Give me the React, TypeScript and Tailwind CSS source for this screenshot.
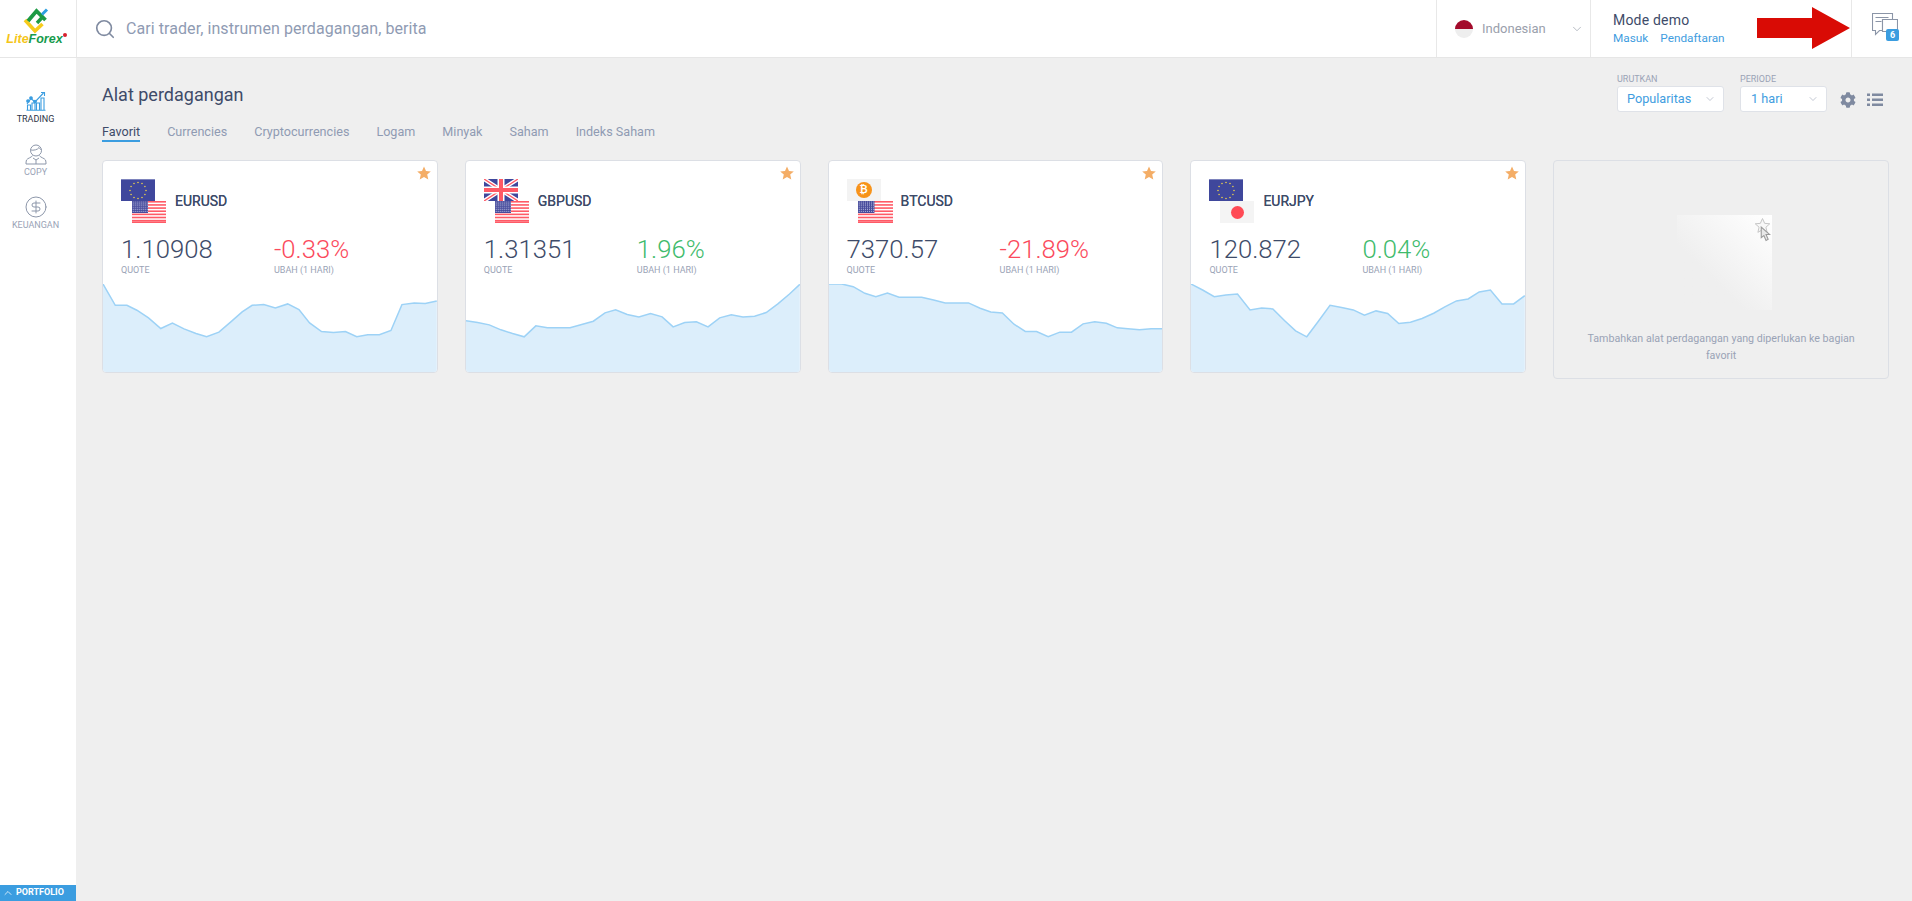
import React from "react";
import { Search, ChevronDown, ChevronUp, CircleDollarSign } from "lucide-react";
import { FaCog } from "react-icons/fa";

function UsFlag({ w = 34 }: { w?: number }) {
  const stripes = [0, 1, 2, 3, 4, 5, 6];
  const dots: React.ReactElement[] = [];
  for (let r = 0; r < 6; r++) for (let c = 0; c < 8; c++) dots.push(<circle key={r + "-" + c} cx={1.2 + c * 2} cy={1 + r * 1.9} r={0.55} fill="#b9bde0" />);
  return (
    <svg width={w} height={22} viewBox="0 0 34 22" preserveAspectRatio="none" className="block shrink-0">
      <rect width="34" height="22" fill="#fff" />
      {stripes.map((i) => <rect key={i} y={i * 3.14} width="34" height="1.6" fill="#ff5a66" />)}
      <rect y="20.4" width="34" height="1.6" fill="#ff5a66" />
      <rect width="16" height="12" fill="#474c9c" />
      {dots}
    </svg>
  );
}

function EuFlag() {
  const stars = Array.from({ length: 12 }, (_, i) => i * Math.PI / 6);
  return (
    <svg width="34" height="22" viewBox="0 0 34 22" className="block shrink-0">
      <rect width="34" height="22" fill="#3f479c" />
      <rect width="34" height="0.7" fill="#9aa0cc" />
      {stars.map((a, i) => <circle key={i} cx={17 + 8 * Math.cos(a)} cy={11.5 + 8 * Math.sin(a)} r="0.8" fill="#e9cf4f" />)}
    </svg>
  );
}

function UkFlag() {
  return (
    <svg width="34" height="22" viewBox="0 0 34 22" className="block shrink-0">
      <rect width="34" height="22" fill="#3f479c" />
      <path d="M0 0 34 22M34 0 0 22" stroke="#fff" strokeWidth="4" />
      <path d="M0 0 34 22M34 0 0 22" stroke="#ff5a66" strokeWidth="1.4" />
      <path d="M17 0V22M0 11H34" stroke="#fff" strokeWidth="7" />
      <path d="M17 0V22M0 11H34" stroke="#ff5a66" strokeWidth="4" />
    </svg>
  );
}

function BtcFlag() {
  return (
    <div className="w-[34px] h-[22px] bg-[#f3f3f3] flex items-center justify-center shrink-0">
      <div className="w-4 h-4 rounded-full bg-[#f7931a] flex items-center justify-center text-white text-[10px] font-bold leading-none">₿</div>
    </div>
  );
}

function JpFlag() {
  return (
    <div className="w-[34px] h-[22px] bg-[#f4f4f4] flex items-center justify-center shrink-0">
      <div className="w-[13px] h-[13px] rounded-full bg-[#ff4a55]" />
    </div>
  );
}

function Spark({ pts }: { pts: number[][] }) {
  const x0 = pts[0][0];
  const x1 = pts[pts.length - 1][0];
  const w = x1 - x0;
  const line = pts.map(([x, y]) => `${x - x0},${y - 403}`).join(" ");
  return (
    <svg viewBox={`0 0 ${w} 265`} preserveAspectRatio="none" className="block w-full h-[88px]">
      <polygon points={`0,265 ${line} ${w},265`} fill="#dceefb" />
      <polyline points={line} fill="none" stroke="#9dd2f6" strokeWidth="1.5" vectorEffect="non-scaling-stroke" />
    </svg>
  );
}

type Item = { name: string; a: React.ReactNode; b: React.ReactNode; price: string; pct: string; up: boolean; pts: number[][] };

const items: Item[] = [
  {
    name: "EURUSD", a: <EuFlag />, b: <UsFlag />, price: "1.10908", pct: "-0.33%", up: false,
    pts: [[38,403],[75,467],[110,467],[140,482],[175,505],[212,537],[247,521],[282,538],[318,552],[350,562],[387,548],[422,518],[457,487],[487,467],[522,465],[557,475],[594,463],[628,480],[660,520],[696,546],[732,549],[768,546],[802,562],[835,556],[870,556],[905,543],[938,465],[975,460],[1008,462],[1043,454]],
  },
  {
    name: "GBPUSD", a: <UkFlag />, b: <UsFlag />, price: "1.31351", pct: "1.96%", up: true,
    pts: [[17,514],[52,519],[87,526],[122,541],[157,552],[192,562],[227,529],[262,535],[297,535],[330,535],[365,525],[400,515],[435,490],[467,481],[502,495],[537,502],[572,492],[607,502],[640,532],[675,519],[710,517],[745,532],[780,505],[815,496],[850,502],[885,500],[920,489],[955,463],[990,433],[1021,404]],
  },
  {
    name: "BTCUSD", a: <BtcFlag />, b: <UsFlag w={35} />, price: "7370.57", pct: "-21.89%", up: false,
    pts: [[25,403],[63,403],[98,411],[133,431],[166,441],[201,430],[236,443],[270,443],[304,443],[340,451],[375,460],[410,460],[445,460],[480,476],[512,487],[547,490],[582,524],[616,546],[650,546],[685,562],[720,548],[755,548],[790,523],[825,517],[860,521],[893,535],[925,538],[960,541],[995,538],[1030,538]],
  },
  {
    name: "EURJPY", a: <EuFlag />, b: <JpFlag />, price: "120.872", pct: "0.04%", up: true,
    pts: [[22,403],[47,421],[72,441],[97,436],[122,433],[149,481],[174,475],[198,478],[223,513],[247,544],[271,562],[296,515],[321,467],[346,474],[371,481],[395,497],[420,484],[445,492],[469,522],[494,518],[519,507],[544,491],[568,472],[593,454],[618,448],[642,427],[666,421],[691,463],[716,463],[740,438]],
  },
];

function Card({ it }: { it: Item }) {
  return (
    <div className="relative h-[213px] bg-white border border-[#dcdfe5] rounded-[4px] overflow-hidden flex flex-col">
      <svg width="14" height="14" viewBox="0 0 14 14" className="absolute top-[5px] right-[6px]">
        <polygon points="7,0.500 9,5 13.800,5.400 10.200,8.600 11.300,13.400 7,10.900 2.700,13.400 3.800,8.600 0.200,5.400 5,5" fill="#f4ad66" />
      </svg>
      <div className="flex items-center pt-[18px] pl-[18px]">
        <div className="flex flex-col w-[54px]">
          {it.a}
          <div className="ml-[11px]">{it.b}</div>
        </div>
        <span className="text-[14px] leading-5 font-normal text-[#3e4b69] [text-shadow:0_0_0.2px_#3e4b69]">{it.name}</span>
      </div>
      <div className="flex pl-[18px] mt-[11px]">
        <div className="w-[153px]">
          <div className="text-[25.700px] leading-[30px] font-light text-[#3e4b69]">{it.price}</div>
          <div className="text-[9px] leading-3 text-[#9aa3b6]">QUOTE</div>
        </div>
        <div>
          <div className={"text-[25.700px] leading-[30px] font-light " + (it.up ? "text-[#3fbb6c]" : "text-[#fb4a5c]")}>{it.pct}</div>
          <div className="text-[9px] leading-3 text-[#9aa3b6]">UBAH (1 HARI)</div>
        </div>
      </div>
      <div className="mt-auto"><Spark pts={it.pts} /></div>
    </div>
  );
}

function Logo() {
  return (
    <div className="w-[77px] h-full border-r border-[#e8e8e8] flex flex-col items-center shrink-0">
      <svg width="77" height="35" viewBox="0 0 77 35" className="block shrink-0" fill="none">
        <path d="M25 20 35 31 42.5 24" stroke="#f6cb1c" strokeWidth="3.6" />
        <path d="M28 21 36.5 11 45.5 20" stroke="#1d9a45" strokeWidth="3.8" />
        <path d="M37 23 43 16.5" stroke="#1d9a45" strokeWidth="3.4" />
        <path d="M42 14.5 47 9.5" stroke="#2e9fe0" strokeWidth="3" />
      </svg>
      <div className="text-[12.500px] leading-[13px] italic font-bold -mt-[2px] whitespace-nowrap [font-family:'Liberation_Sans',sans-serif] relative pr-[4px] -ml-[3px]">
        <span className="text-[#f5c518]">Lite</span><span className="text-[#169b4c]">Forex</span>
        <span className="absolute right-0 top-0 w-[4px] h-[4px] rounded-full bg-[#d8212f]" />
      </div>
    </div>
  );
}

function Header() {
  return (
    <header className="relative h-[58px] bg-white border-b border-[#e6e6e6] flex items-stretch shrink-0">
      <Logo />
      <div className="flex-1 flex items-center pl-[17px]">
        <Search className="w-[22px] h-[22px] text-[#7f8aa0]" strokeWidth={1.8} />
        <span className="ml-[10px] text-[16px] tracking-[0.07px] text-[#8f9bb3]">Cari trader, instrumen perdagangan, berita</span>
      </div>
      <div className="w-[154px] border-l border-[#e8e8e8] flex items-center pl-[18px] shrink-0">
        <div className="w-[18px] h-[18px] rounded-full overflow-hidden flex flex-col">
          <div className="h-1/2 bg-[#a30b2b]" />
          <div className="h-1/2 bg-[#eeeeee]" />
        </div>
        <span className="ml-[9px] text-[13px] text-[#9aa0ac]">Indonesian</span>
        <ChevronDown className="ml-[24px] w-[14px] h-[14px] text-[#9aa0ac]" strokeWidth={1.2} />
      </div>
      <div className="w-[261px] border-l border-[#e8e8e8] pl-[22px] flex flex-col justify-center shrink-0">
        <div className="text-[14px] leading-[19px] tracking-[0.2px] text-[#3e4b69]">Mode demo</div>
        <div className="text-[11.800px] leading-[17px] text-[#3f9de0] flex gap-3">
          <span>Masuk</span><span>Pendaftaran</span>
        </div>
      </div>
      <div className="relative w-[61px] border-l border-[#e8e8e8] flex items-center pl-[20px] shrink-0">
        <svg width="26" height="24" viewBox="0 0 26 24" fill="none" stroke="#8b95a7" strokeWidth="1.1" className="-mt-[8px]">
          <path d="M.5.5h20v6h-10v11h-3l-4 4v-4h-3z" />
          <path d="M3.500 4.500h13M3.500 8.500h6" />
          <path d="M10.500 6.500h15v12h-15z" fill="#fff" />
        </svg>
        <div className="absolute right-[13px] top-[29px] w-[13px] h-[12px] rounded-[2px] bg-[#3b9de0] text-white text-[9px] font-bold leading-[12px] text-center">6</div>
      </div>
      <svg width="93" height="42" viewBox="0 0 93 42" className="absolute left-[1757px] top-[7px]">
        <polygon points="0,11 55,11 55,0 93,21 55,42 55,31 0,31" fill="#d90b05" />
      </svg>
    </header>
  );
}

function TradingIcon() {
  return (
    <svg width="20" height="20" viewBox="0 0 20 20" fill="none" stroke="#3b9de0" strokeWidth="1.1" className="shrink-0">
      <path d="M1 13 5 7.500 9 11 17.500 2" />
      <path d="M15 1.500h3.500v3.500" />
      <circle cx="2" cy="10" r="1.300" fill="#3b9de0" />
      <circle cx="5" cy="7" r="1.300" fill="#3b9de0" />
      <circle cx="9" cy="10.500" r="1.300" fill="#3b9de0" />
      <path d="M1.500 19v-5h3v5M6 19v-7h3v7M10.500 19v-7h3v7M15 19V7h3v12M0.500 19.300h19" />
    </svg>
  );
}

function CopyIcon() {
  return (
    <svg width="22" height="21" viewBox="0 0 22 21" fill="none" stroke="#8d97aa" strokeWidth="1" className="shrink-0">
      <circle cx="11" cy="6.500" r="5.500" />
      <path d="M5.500 6c3 .5 7 0 8.500-2.500 1 1.500 2 2.500 2.500 2.500" />
      <path d="M7.500 11.500c-.5 2-5 2.500-6 4.500-.5 1-.5 3-.5 4h20c0-1 0-3-.5-4-1-2-5.500-2.500-6-4.500" />
      <path d="M8 14l3 2 3-2M11 16v4" />
    </svg>
  );
}

function NavItem({ icon, label, active, gap }: { icon: React.ReactNode; label: string; active?: boolean; gap: string }) {
  return (
    <div className="flex flex-col items-center h-[53px]">
      {icon}
      <span className={"text-[9px] leading-3 " + gap + " " + (active ? "text-[#2d3446]" : "text-[#9aa3b6]")}>{label}</span>
    </div>
  );
}

function Sidebar() {
  return (
    <aside className="w-[76px] bg-white flex flex-col shrink-0">
      <div className="pt-[33px] pr-[5px] flex-1">
        <NavItem gap="mt-[2px]" active label="TRADING" icon={<TradingIcon />} />
        <NavItem gap="mt-[1px]" label="COPY" icon={<CopyIcon />} />
        <NavItem gap="mt-0" label="KEUANGAN" icon={<CircleDollarSign className="w-[24px] h-[24px] text-[#8d97aa] -mt-[2px] shrink-0" strokeWidth={1} />} />
      </div>
      <div className="h-[16px] bg-[#3b9de0] flex items-center pl-[2px] text-white text-[9px] font-bold">
        <ChevronUp className="w-[12px] h-[12px]" strokeWidth={1.5} />
        <span className="ml-[2px]">PORTFOLIO</span>
      </div>
    </aside>
  );
}

function Select({ label, value, w, pl }: { label: string; value: string; w: string; pl: string }) {
  return (
    <div className={w}>
      <div className="text-[9px] leading-[13px] text-[#9aa3b6]">{label}</div>
      <div className={"h-[26px] bg-white border border-[#dfe2e8] rounded-[3px] flex items-center justify-between pr-[7px] text-[12.700px] text-[#3f9de0] " + pl}>
        <span>{value}</span>
        <ChevronDown className="w-[12px] h-[12px] text-[#9aa3b6]" strokeWidth={1.2} />
      </div>
    </div>
  );
}

function Main() {
  const tabs = ["Currencies", "Cryptocurrencies", "Logam", "Minyak", "Saham", "Indeks Saham"];
  return (
    <main className="flex-1 pl-[26px] pr-[23px] pt-[15px] min-w-0">
      <div className="flex justify-between items-start">
        <div className="pt-[10px]">
          <h1 className="text-[18px] leading-6 font-normal text-[#3e4b69]">Alat perdagangan</h1>
          <div className="flex gap-[27px] mt-[15px] text-[12.600px] leading-[19px] text-[#8f9bb3]">
            <span className="text-[#3e4b69] border-b-2 border-[#3b9de0] h-5">Favorit</span>
            {tabs.map((t) => <span key={t}>{t}</span>)}
          </div>
        </div>
        <div className="flex items-end pr-[6px]">
          <Select label="URUTKAN" value="Popularitas" w="w-[107px]" pl="pl-[9px]" />
          <div className="ml-4"><Select label="PERIODE" value="1 hari" w="w-[87px]" pl="pl-[10px]" /></div>
          <FaCog className="ml-[13px] mb-[4px] w-[16px] h-[16px] text-[#7f8aa0]" />
          <svg width="16" height="14" viewBox="0 0 16 14" className="ml-[11px] mb-[5px]" fill="#7f8aa0">
            <rect x="0" y="0.500" width="3" height="2.500" /><rect x="5" y="0.500" width="11" height="2.500" />
            <rect x="0" y="5.500" width="3" height="2.500" /><rect x="5" y="5.500" width="11" height="2.500" />
            <rect x="0" y="10.500" width="3" height="2.500" /><rect x="5" y="10.500" width="11" height="2.500" />
          </svg>
        </div>
      </div>
      <div className="grid grid-cols-5 gap-[27px] mt-[18px] items-start">
        {items.map((it) => <Card key={it.name} it={it} />)}
        <div className="h-[219px] border border-[#dcdfe5] rounded-[4px] flex flex-col items-center pt-[54px]">
          <div className="relative w-[95px] h-[95px] ml-[7px] bg-linear-to-bl from-white to-[#efefef] to-65%">
            <svg width="15" height="15" viewBox="0 0 14 14" className="absolute top-[3px] right-[2px]">
              <polygon points="7,0.500 9,5 13.800,5.400 10.200,8.600 11.300,13.400 7,10.900 2.700,13.400 3.800,8.600 0.200,5.400 5,5" fill="#f8f8f8" stroke="#c4c4c4" strokeWidth="0.9" />
            </svg>
            <svg width="11" height="16" viewBox="0 0 10 15" className="absolute top-[11px] right-[1px]" fill="#e8e8e8" stroke="#9a9a9a" strokeWidth="1">
              <path d="M1 1v10l2.500-2 2 4.500 2-1-2-4.500H9z" />
            </svg>
          </div>
          <p className="mt-[20px] px-[20px] text-center text-[10.700px] leading-[17px] text-[#9aa3b6]">Tambahkan alat perdagangan yang diperlukan ke bagian favorit</p>
        </div>
      </div>
    </main>
  );
}

export default function App() {
  return (
    <div className="w-[1912px] h-[901px] flex flex-col bg-[#efefef] overflow-hidden [font-family:Roboto,sans-serif]">
      <Header />
      <div className="flex flex-1 min-h-0">
        <Sidebar />
        <Main />
      </div>
    </div>
  );
}
